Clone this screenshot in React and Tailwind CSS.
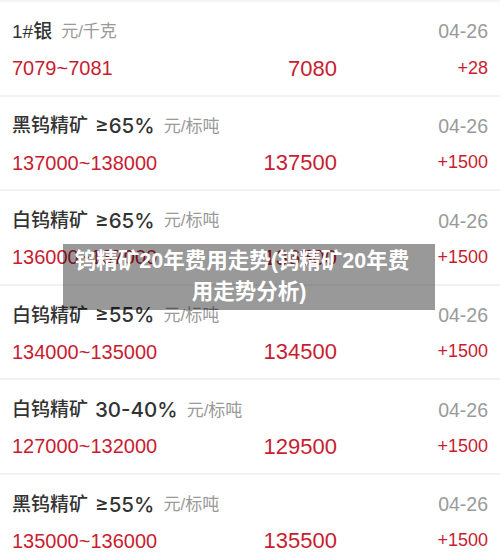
import React from "react";

const rows = [
  { name: "1#银", unit: "元/千克", date: "04-26", range: "7079~7081", price: "7080", change: "+28" },
  { name: "黑钨精矿", grade: "≥65%", unit: "元/标吨", date: "04-26", range: "137000~138000", price: "137500", change: "+1500" },
  { name: "白钨精矿", grade: "≥65%", unit: "元/标吨", date: "04-26", range: "136000~137000", price: "136500", change: "+1500" },
  { name: "白钨精矿", grade: "≥55%", unit: "元/标吨", date: "04-26", range: "134000~135000", price: "134500", change: "+1500" },
  { name: "白钨精矿", grade: "30-40%", unit: "元/标吨", date: "04-26", range: "127000~132000", price: "129500", change: "+1500" },
  { name: "黑钨精矿", grade: "≥55%", unit: "元/标吨", date: "04-26", range: "135000~136000", price: "135500", change: "+1500" },
];

const App = () => {
  return (
    <div
      className="relative w-[500px] h-[552px] overflow-hidden bg-white border-t-2 border-[#f4f4f4]"
      style={{ fontFamily: '"Liberation Sans", "Noto Sans CJK SC", sans-serif' }}
    >
      {rows.map((r, i) => (
        <div
          key={i}
          className="h-[94.6px] px-3 border-b-2 border-[#f2f2f2] flex flex-col"
        >
          {/* 标题行 */}
          <div className="mt-[17px] h-[26px] flex items-center justify-between">
            <div className="flex items-center">
              <span className="text-[19px] font-medium text-[#333]">
                {r.name}
              </span>
              {r.grade && (
                <span className="ml-[7px] font-['Inter',sans-serif] text-[20.5px] font-medium text-[#333]">
                  {r.grade}
                </span>
              )}
              <span className="ml-[9px] text-[17px] text-[#9a9a9a]">
                {r.unit}
              </span>
            </div>
            <span className="text-[19.5px] text-[#9a9a9a]">{r.date}</span>
          </div>

          {/* 价格行 */}
          <div className="mt-[10px] h-[26px] flex items-center text-[#c81d31]">
            <span className="flex-1 text-[20px]">{r.range}</span>
            <span className="text-[22px] text-right">{r.price}</span>
            <span className="w-[151px] text-[18px] text-right">{r.change}</span>
          </div>
        </div>
      ))}

      {/* 标题遮罩 */}
      <div className="absolute left-[63px] top-[242px] w-[372px] h-[66px] bg-black/40 flex flex-col items-center justify-center text-center text-white font-bold text-[21.5px] leading-[31px]">
        <span className="block mr-[14px]">钨精矿20年费用走势(钨精矿20年费</span>
        <span className="block">用走势分析)</span>
      </div>
    </div>
  );
};

export default App;
